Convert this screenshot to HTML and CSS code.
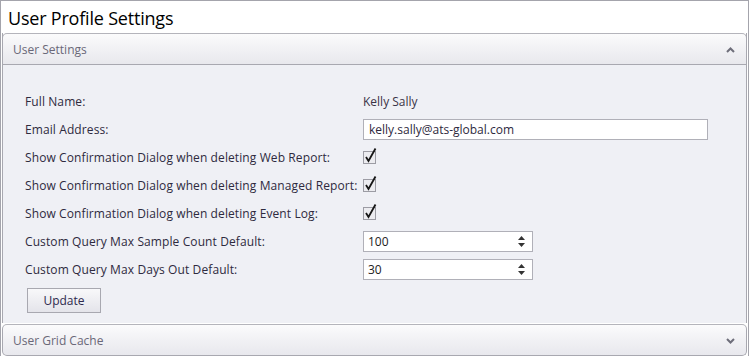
FILE: index.html
```html
<!DOCTYPE html>
<html lang="en">
<head>
    <meta charset="UTF-8">
    <title>User Profile Settings</title>
    <link rel="stylesheet" href="styles.css">
</head>
<body>
    <div class="page">
        <h1>User Profile Settings</h1>

        <div class="panel">
            <div class="panel-header">
                <span>User Settings</span>
                <svg class="chevron" width="9" height="6" viewBox="0 0 9 6"><path d="M1 5 L4.5 1.5 L8 5" fill="none" stroke="#6e6e7a" stroke-width="2"/></svg>
            </div>
            <div class="panel-body">
                <div class="form">
                    <div class="label">Full Name:</div>
                    <div class="value">Kelly Sally</div>

                    <div class="label">Email Address:</div>
                    <div class="value"><input class="text-input" type="text" value="kelly.sally@ats-global.com"></div>

                    <div class="label">Show Confirmation Dialog when deleting Web Report:</div>
                    <div class="value"><svg class="check" width="15" height="17" viewBox="0 0 15 17"><rect x="0.5" y="4.5" width="12" height="12" fill="#ececf0" stroke="#9c9ca4"/><path d="M3 10 L5.5 14 L12.5 1.5" fill="none" stroke="#161616" stroke-width="1.8"/></svg></div>

                    <div class="label">Show Confirmation Dialog when deleting Managed Report:</div>
                    <div class="value"><svg class="check" width="15" height="17" viewBox="0 0 15 17"><rect x="0.5" y="4.5" width="12" height="12" fill="#ececf0" stroke="#9c9ca4"/><path d="M3 10 L5.5 14 L12.5 1.5" fill="none" stroke="#161616" stroke-width="1.8"/></svg></div>

                    <div class="label">Show Confirmation Dialog when deleting Event Log:</div>
                    <div class="value"><svg class="check" width="15" height="17" viewBox="0 0 15 17"><rect x="0.5" y="4.5" width="12" height="12" fill="#ececf0" stroke="#9c9ca4"/><path d="M3 10 L5.5 14 L12.5 1.5" fill="none" stroke="#161616" stroke-width="1.8"/></svg></div>

                    <div class="label">Custom Query Max Sample Count Default:</div>
                    <div class="value">
                        <div class="spinner">
                            <span>100</span>
                            <svg width="7" height="11" viewBox="0 0 7 11"><path d="M0 4 L3.5 0 L7 4 Z M0 7 L3.5 11 L7 7 Z" fill="#333"/></svg>
                        </div>
                    </div>

                    <div class="label">Custom Query Max Days Out Default:</div>
                    <div class="value">
                        <div class="spinner">
                            <span>30</span>
                            <svg width="7" height="11" viewBox="0 0 7 11"><path d="M0 4 L3.5 0 L7 4 Z M0 7 L3.5 11 L7 7 Z" fill="#333"/></svg>
                        </div>
                    </div>
                </div>
                <button class="btn">Update</button>
            </div>
        </div>

        <div class="panel-header collapsed">
            <span>User Grid Cache</span>
            <svg class="chevron" width="9" height="6" viewBox="0 0 9 6"><path d="M1 1 L4.5 4.5 L8 1" fill="none" stroke="#6e6e7a" stroke-width="2"/></svg>
        </div>
    </div>
</body>
</html>
```

FILE: styles.css
```css
* {
    box-sizing: border-box;
    margin: 0;
    padding: 0;
}

body {
    font-family: 'Open Sans', 'DejaVu Sans', sans-serif;
    font-size: 12px;
    color: #2e2a3e;
    background: #fff;
}

.page {
    width: 749px;
    height: 356px;
    border: 1px solid #a4a4ac;
    border-bottom: none;
    padding: 0 1px;
    overflow: hidden;
}

h1 {
    font-size: 18px;
    font-weight: 400;
    color: #000;
    height: 32px;
    line-height: 34px;
    padding-left: 6px;
    letter-spacing: -0.2px;
}

.panel {
    border-left: 1px solid #a8a8b0;
    border-right: 1px solid #a8a8b0;
}

.panel-header {
    display: flex;
    align-items: center;
    justify-content: space-between;
    height: 32px;
    padding: 1px 11px 0 10px;
    color: #6a6878;
    background: linear-gradient(#fbfbfc, #f2f2f5 45%, #e8e8ed);
    border-top: 1px solid #b4b4bb;
    border-bottom: 1px solid #a8a8b0;
    border-radius: 5px 5px 0 0;
    margin: 0 -1px;
    border-left: 1px solid #a8a8b0;
    border-right: 1px solid #a8a8b0;
}

.panel-header.collapsed {
    border-radius: 5px;
    margin: 1px 0 0 0;
}

.panel-body {
    background: #eff0f5;
    padding: 22px 0 9px 22px;
    height: 258px;
}

.form {
    display: grid;
    grid-template-columns: 338px 345px;
    grid-auto-rows: 28px;
    align-items: center;
}

.label {
    letter-spacing: 0.1px;
}

.value {
    color: #3a3346;
}

.text-input {
    display: block;
    width: 345px;
    height: 21px;
    border: 1px solid #b0b0b8;
    background: #fff;
    padding: 0 5px;
    font: inherit;
    color: #2e2a3e;
    outline: none;
}

.check {
    display: block;
    margin-top: -4px;
}

.spinner {
    width: 170px;
    height: 21px;
    border: 1px solid #b0b0b8;
    background: #fff;
    display: flex;
    align-items: center;
    justify-content: space-between;
    padding: 0 7px 0 4px;
    color: #222;
}

.btn {
    display: block;
    margin: 5px 0 0 2px;
    width: 74px;
    height: 25px;
    font: inherit;
    color: #2e2a4e;
    border: 1px solid #a8a8b0;
    background: linear-gradient(#f8f8fa, #e4e4ea);
}
```
